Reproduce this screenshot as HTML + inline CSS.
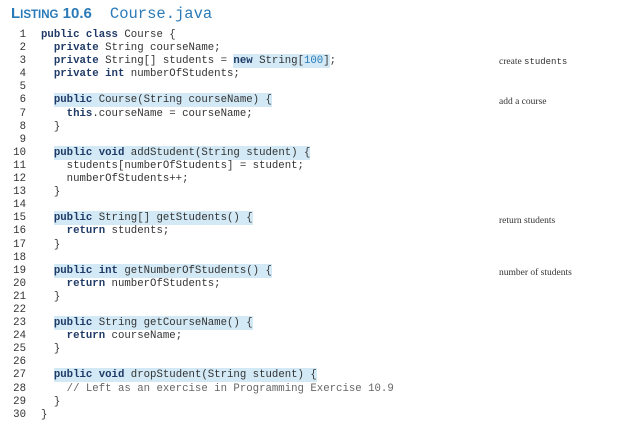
<!DOCTYPE html>
<html><head><meta charset="utf-8"><style>
html,body{margin:0;padding:0;background:#fff;width:624px;height:430px;overflow:hidden;position:relative}
.t{position:absolute;left:11px;top:5px;color:#2a7ab8;white-space:nowrap}
.t .l{font-family:"Liberation Sans",sans-serif;font-weight:bold;font-size:15px}
.t .s{font-size:11.5px}
.t .c{font-family:"Liberation Mono",monospace;font-size:15.5px;margin-left:18px}
pre{position:absolute;margin:0;top:29px;font-family:"Liberation Mono",monospace;font-size:10.7px;line-height:13.1px;color:#333}
.n{left:0;width:26px;text-align:right;color:#333}
.code{left:41px}
b{color:#1f3a66}
.h{background:#d3eaf6;padding:1px 0}
.num{color:#2a7ab8}
.cm{color:#666}
.a{position:absolute;left:499px;font-family:"Liberation Serif",serif;font-size:9.5px;color:#333;white-space:nowrap}
.a span{font-family:"Liberation Mono",monospace;font-size:9px}
</style></head><body>
<div class="t"><span class="l">L<span class="s">ISTING</span> 10.6</span><span class="c">Course.java</span></div>
<pre class="n">1
2
3
4
5
6
7
8
9
10
11
12
13
14
15
16
17
18
19
20
21
22
23
24
25
26
27
28
29
30</pre>
<pre class="code"><b>public class</b> Course {
  <b>private</b> String courseName;
  <b>private</b> String[] students = <span class="h"><b>new</b> String[<span class="num">100</span>]</span>;
  <b>private int</b> numberOfStudents;

  <span class="h"><b>public</b> Course(String courseName) {</span>
    <b>this</b>.courseName = courseName;
  }

  <span class="h"><b>public void</b> addStudent(String student) {</span>
    students[numberOfStudents] = student;
    numberOfStudents++;
  }

  <span class="h"><b>public</b> String[] getStudents() {</span>
    <b>return</b> students;
  }

  <span class="h"><b>public int</b> getNumberOfStudents() {</span>
    <b>return</b> numberOfStudents;
  }

  <span class="h"><b>public</b> String getCourseName() {</span>
    <b>return</b> courseName;
  }

  <span class="h"><b>public void</b> dropStudent(String student) {</span>
    <span class="cm">// Left as an exercise in Programming Exercise 10.9</span>
  }
}</pre>
<div class="a" style="top:57px">create <span>students</span></div>
<div class="a" style="top:97px">add a course</div>
<div class="a" style="top:216px">return students</div>
<div class="a" style="top:268px">number of students</div>
</body></html>
